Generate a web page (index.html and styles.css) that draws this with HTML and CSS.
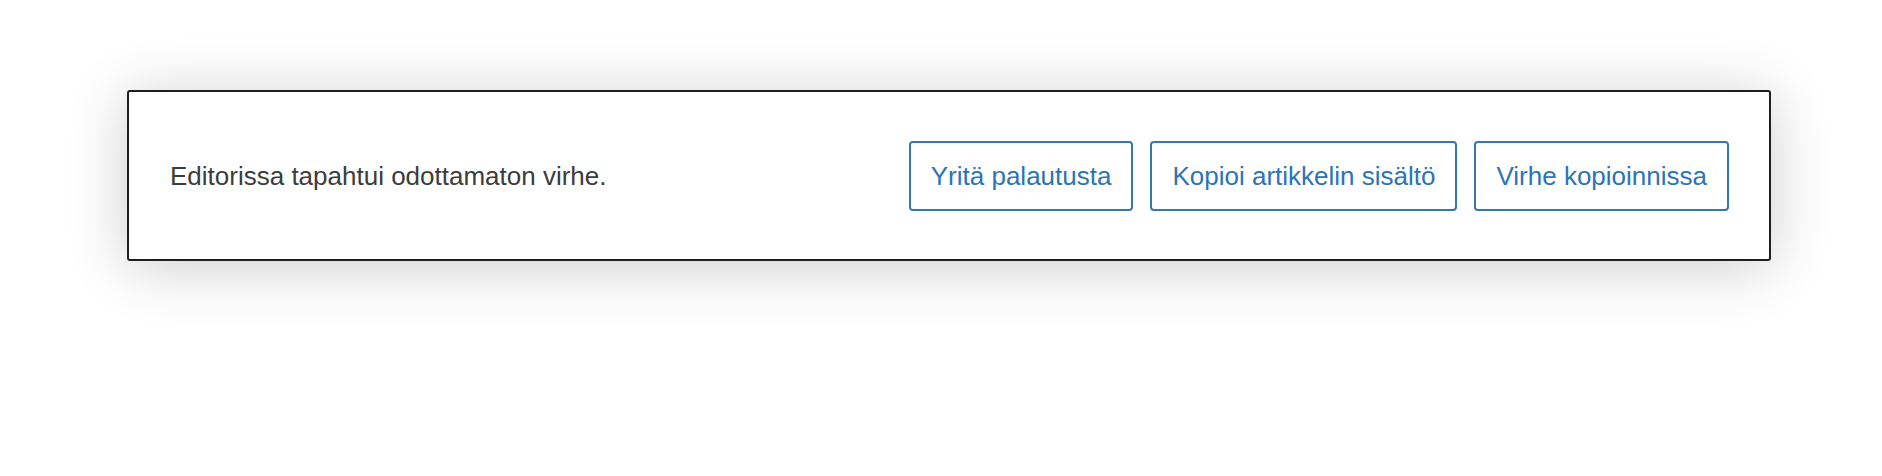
FILE: index.html
```html
<!DOCTYPE html>
<html lang="fi">
<head>
<meta charset="utf-8">
<title>Editorivirhe</title>
<link rel="stylesheet" href="styles.css">
</head>
<body>
<div class="page">
  <div class="error-boundary">
    <p class="error-message">Editorissa tapahtui odottamaton virhe.</p>
    <div class="actions">
      <button class="btn" type="button">Yritä palautusta</button>
      <button class="btn" type="button">Kopioi artikkelin sisältö</button>
      <button class="btn" type="button">Virhe kopioinnissa</button>
    </div>
  </div>
</div>
</body>
</html>
```

FILE: styles.css
```css
html, body {
  margin: 0;
  padding: 0;
  background: #ffffff;
}

body {
  font-family: "Liberation Sans", Arial, sans-serif;
  width: 1882px;
  height: 476px;
  overflow: hidden;
}

.page {
  padding: 90px 111px 0 127px;
}

.error-boundary {
  box-sizing: border-box;
  height: 171px;
  border: 2px solid #1e1e1e;
  border-radius: 3px;
  background: #ffffff;
  box-shadow: 0 6px 60px rgba(0, 0, 0, 0.2);
  padding: 49px 40px 48px 41px;
  display: flex;
  align-items: center;
  justify-content: space-between;
}

.error-message {
  margin: 0;
  font-size: 26px;
  color: #3c3c3c;
}

.actions {
  display: flex;
  gap: 17px;
}

.btn {
  box-sizing: border-box;
  height: 70px;
  padding: 0 20px;
  border: 2px solid #3278b6;
  border-radius: 4px;
  background: #ffffff;
  color: #2b74b6;
  font-family: "Liberation Sans", Arial, sans-serif;
  font-size: 26px;
  cursor: pointer;
}
```
